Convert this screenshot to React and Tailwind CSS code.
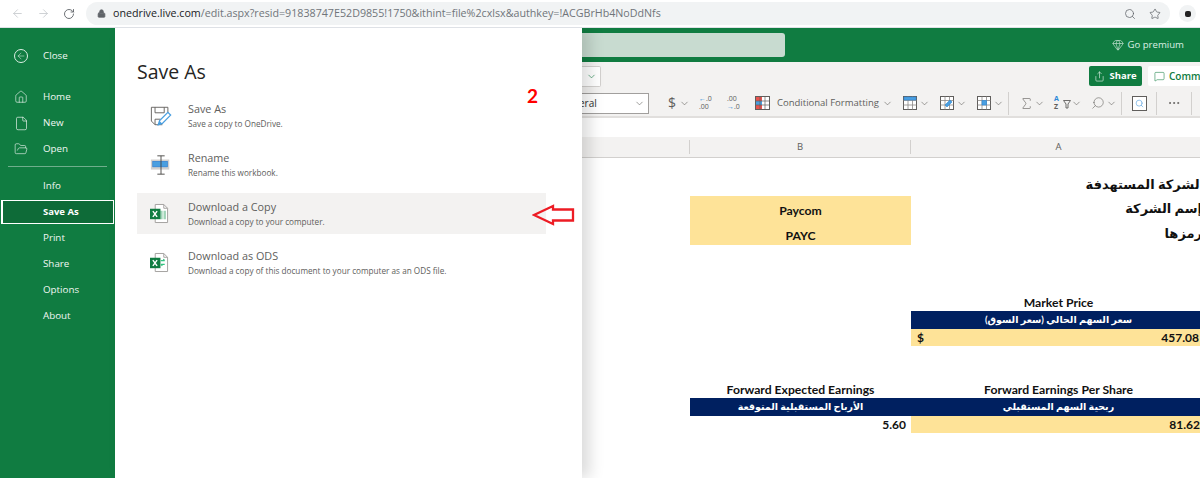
import React from "react";
import { ArrowLeft, ArrowRight, RotateCw, Lock, Search, Star, ChevronDown, Home, File, FolderOpen, MessageSquare, Share, Gem, Sigma, Ellipsis } from "lucide-react";

const ui = "font-['Open_Sans',sans-serif]";
const sheet = "font-['Lato','DejaVu_Sans',sans-serif]";

function SaveIcon() {
  return (
    <svg width="22" height="22" viewBox="0 0 24 24" fill="none">
      <path d="M1.500 2.500h18v9M1.500 2.500v15l4 4h8" stroke="#605e5c" strokeWidth="1" />
      <path d="M5.500 2.500v6h10v-6M5.500 21.500v-6h6" stroke="#605e5c" strokeWidth="1" />
      <path d="M9 21.500l1.500-4.500 9-9 3 3-9 9z" fill="#fff" stroke="#4a9fe0" strokeWidth="1.400" />
      <path d="M9 22l1.500-4.500 3 3z" fill="#4a9fe0" />
    </svg>
  );
}
function RenameIcon() {
  return (
    <svg width="22" height="22" viewBox="0 0 24 24" fill="none">
      <rect x="1" y="6" width="20" height="11" fill="#d2d0ce" />
      <rect x="3" y="8" width="16" height="6" fill="#4a9fe0" stroke="#2b7cd3" strokeWidth=".7" />
      <path d="M12 2v20M8 2h8M8 22h8" stroke="#484644" strokeWidth="1" />
    </svg>
  );
}
function XlIcon({ ods }) {
  return (
    <svg width="19" height="21" viewBox="0 0 20 22" fill="none">
      <path d="M5.500 1.500h9l4 4v15h-13z" fill="#fff" stroke="#a19f9d" strokeWidth="1" />
      <path d="M14.500 1.500v4h4" stroke="#a19f9d" strokeWidth="1" />
      {ods ? (
        <path d="M11.500 9h4M15.500 9l-1.500-1.500M11.500 13h4M11.500 13l1.500 1.500" stroke="#33c481" strokeWidth="1.300" />
      ) : (
        <path d="M12 8v9M15.500 8v9" stroke="#9fd4b7" strokeWidth="2.500" />
      )}
      <rect x="0" y="6" width="11" height="11" fill="#107c41" />
      <path d="M3 8.500l4.500 6M7.500 8.500l-4.500 6" stroke="#fff" strokeWidth="1.500" />
    </svg>
  );
}
function BackstageItem({ icon, title, sub, active }) {
  return (
    <div className={`flex h-[41px] items-center ${active ? "bg-[#f3f2f1]" : ""}`}>
      <div className="flex w-[51px] shrink-0 justify-start pl-[13px]">{icon}</div>
      <div className="flex flex-col">
        <span className="text-[10.800px] leading-[16px] text-[#605e5c]">{title}</span>
        <span className="text-[8.200px] leading-[13px] text-[#605e5c]">{sub}</span>
      </div>
    </div>
  );
}
function NavRow({ icon, label }) {
  return (
    <div className="flex h-[26px] items-center">
      <div className="flex w-[43px] shrink-0 justify-start pl-[14px]">{icon}</div>
      <span className="text-[9.800px] text-[#f0f7f3]">{label}</span>
    </div>
  );
}
function Chev({ cls = "text-[#605e5c]" }) {
  return <ChevronDown size={11} strokeWidth={1.300} className={cls} />;
}
function GridIcon({ accent }) {
  return (
    <svg width="16" height="16" viewBox="0 0 16 16" fill="none">
      <rect x="1.500" y="1.500" width="13" height="13" fill="#fff" stroke="#605e5c" />
      <path d="M1.500 5.500h13M1.500 10h13M6 1.500v13M10.500 1.500v13" stroke="#8a8886" strokeWidth=".8" />
      <path d={accent} fill="#4a9fe0" stroke="#2b88d8" strokeWidth=".6" />
    </svg>
  );
}

export default function App() {
  return (
    <div className={`flex h-[482px] w-[1200px] flex-col overflow-hidden bg-white ${ui}`}>
      {/* browser bar */}
      <div className="flex h-[28px] shrink-0 items-center border-b border-[#dee1e6] bg-white">
        <div className="flex w-[86px] shrink-0 items-center gap-[13px] pl-[11px]">
          <ArrowLeft size={13} strokeWidth={1.500} className="text-[#c4c7cb]" />
          <ArrowRight size={13} strokeWidth={1.500} className="text-[#c4c7cb]" />
          <RotateCw size={12} strokeWidth={1.800} className="text-[#5f6368]" />
        </div>
        <div className="flex h-[23px] w-[1084px] shrink-0 items-center rounded-full bg-[#f1f3f4] pl-[11px] pr-[9px]">
          <Lock size={9} fill="#5f6368" className="text-[#5f6368]" />
          <span className="ml-[7px] flex-1 text-[10.700px] text-[#70757a]">
            <span className="text-[#202124]">onedrive.live.com</span>/edit.aspx?resid=91838747E52D9855!1750&amp;ithint=file%2cxlsx&amp;authkey=!ACGBrHb4NoDdNfs
          </span>
          <Search size={12} strokeWidth={1.500} className="mr-[13px] text-[#5f6368]" />
          <Star size={12} strokeWidth={1.500} className="text-[#5f6368]" />
        </div>
        <div className="ml-[9px] flex h-[17px] w-[17px] items-center justify-center rounded-full bg-[#f1f3f4]">
          <div className="h-[6px] w-[6px] rounded-[2px] bg-[#222]" />
        </div>
      </div>

      <div className="flex h-[450px] shrink-0 overflow-hidden">
        {/* backstage nav */}
        <div className="flex w-[115px] shrink-0 flex-col bg-[#107c41] pt-[15px] text-white">
          <NavRow icon={<ArrowLeft size={10} strokeWidth={1.300} className="box-content rounded-full border border-[#dcefe4] p-[1px] text-[#dcefe4]" />} label="Close" />
          <div className="h-[15px]" />
          <NavRow icon={<Home size={14} strokeWidth={1} />} label="Home" />
          <NavRow icon={<File size={15} strokeWidth={1} />} label="New" />
          <NavRow icon={<FolderOpen size={14} strokeWidth={1} />} label="Open" />
          <div className="mx-[8px] mb-[6px] mt-[4px] h-px bg-[#6fae8c]" />
          <NavRow label="Info" />
          <div className="mx-[1px] mt-[1px] flex h-[24px] items-center border border-l-2 border-white bg-[#0e6b38] pl-[40px] text-[9.500px] font-bold">Save As</div>
          <div className="mt-[1px]"><NavRow label="Print" /></div>
          <NavRow label="Share" />
          <NavRow label="Options" />
          <NavRow label="About" />
        </div>

        {/* save as panel */}
        <div className="relative z-10 w-[467px] shrink-0 bg-white pl-[22px] pr-[36px] shadow-[8px_0_14px_rgba(0,0,0,0.14)]">
          <h1 className="mt-[31px] text-[19.500px] leading-[26px] text-[#252423]">Save As</h1>
          <div className="mt-[10px] flex flex-col gap-[8px]">
            <BackstageItem icon={<SaveIcon />} title="Save As" sub="Save a copy to OneDrive." />
            <BackstageItem icon={<RenameIcon />} title="Rename" sub="Rename this workbook." />
            <BackstageItem active icon={<XlIcon />} title="Download a Copy" sub="Download a copy to your computer." />
            <BackstageItem icon={<XlIcon ods />} title="Download as ODS" sub="Download a copy of this document to your computer as an ODS file." />
          </div>
          <span className="absolute left-[412px] top-[56px] font-['Lato',sans-serif] text-[19px] font-bold leading-[24px] text-[#ff0000]">2</span>
          <svg className="absolute left-[417px] top-[176px]" width="44" height="22" viewBox="0 0 44 22" fill="none">
            <path d="M2 11L21 2v3.500h20v11H21V20z" stroke="#ed1c24" strokeWidth="2.300" fill="none" />
          </svg>
        </div>

        {/* excel */}
        <div className="flex min-w-0 flex-1 flex-col">
          <div className="flex h-[34px] shrink-0 items-center bg-[#107c41]">
            <div className="h-[24px] w-[203px] rounded-r-[3px] bg-[#c8dbd0]" />
            <div className="ml-auto mr-[16px] flex items-center gap-[4px] pt-[1px] text-[9.600px] text-[#dcefe4]">
              <Gem size={12} strokeWidth={1.200} />
              <span>Go premium</span>
            </div>
          </div>
          <div className="flex h-[56px] shrink-0 flex-col border-b-[2px] border-[#e1dfdd] bg-[#f3f2f1]">
            <div className="flex h-[28px] items-center">
              <div className="flex h-[21px] w-[19px] items-center justify-center rounded-r-[2px] border border-l-0 border-[#d2d0ce] bg-white">
                <Chev cls="text-[#107c41]" />
              </div>
              <div className="ml-auto flex h-[20px] w-[53px] items-center justify-center gap-[4px] rounded-[2px] bg-[#107c41] text-[9.500px] font-bold text-white">
                <Share size={11} strokeWidth={1.200} />
                Share
              </div>
              <div className="ml-[6px] flex h-[20px] w-[52px] items-center gap-[4px] overflow-hidden rounded-l-[2px] bg-white pl-[6px] text-[10px] font-semibold text-[#107c41]">
                <MessageSquare size={11} strokeWidth={1.200} className="shrink-0" />
                <span>Comments</span>
              </div>
            </div>
            <div className="flex h-[26px] items-center text-[#605e5c]">
              <div className="flex h-[21px] w-[67px] shrink-0 items-center justify-between border border-l-0 border-[#a19f9d] bg-white pr-[3px] text-[10px]">
                <span className="-ml-[3px] text-[#323130]">eral</span>
                <Chev />
              </div>
              <span className="ml-[19px] text-[14px] leading-none">$</span>
              <span className="ml-[3px]"><Chev /></span>
              <div className="ml-[9px] flex w-[15px] flex-col text-[7px] leading-[8px]"><span><span className="text-[#2b88d8]">←</span>.0</span><span>.00</span></div>
              <div className="ml-[13px] flex w-[15px] flex-col text-[7px] leading-[8px]"><span>.00</span><span><span className="text-[#2b88d8]">→</span>.0</span></div>
              <div className="ml-[13px]">
                <svg width="15" height="14" viewBox="0 0 15 14" fill="none">
                  <rect x="0.500" y="0.500" width="14" height="13" fill="#fff" stroke="#605e5c" />
                  <rect x="1" y="1" width="6" height="4" fill="#e8534f" />
                  <rect x="1" y="5" width="6" height="4" fill="#4a9fe0" />
                  <rect x="1" y="9" width="6" height="4" fill="#e8534f" />
                  <path d="M5 1v12M10 1v12M1 5h13M1 9h13" stroke="#605e5c" strokeWidth=".7" />
                </svg>
              </div>
              <span className="ml-[7px] w-[105px] shrink-0 whitespace-nowrap text-[9.500px]">Conditional Formatting</span>
              <Chev />
              <span className="ml-[9px]"><GridIcon accent="M2 2h12v3H2z" /></span>
              <span className="ml-[1px]"><Chev /></span>
              <span className="ml-[9px]"><GridIcon accent="M6 10l5-5 2 2-5 5z" /></span>
              <span className="ml-[1px]"><Chev /></span>
              <span className="ml-[9px]"><GridIcon accent="M6 5.500h4.500V10H6z" /></span>
              <span className="ml-[1px]"><Chev /></span>
              <div className="ml-[4px] h-[23px] w-px bg-[#d2d0ce]" />
              <Sigma size={15} strokeWidth={1} className="ml-[10px]" />
              <Chev />
              <div className="ml-[9px] flex w-[9px] flex-col text-[7px] font-bold leading-[8px]"><span className="text-[#2b88d8]">A</span><span>Z</span></div>
              <svg width="8" height="9" viewBox="0 0 8 9" fill="none" className="mt-[3px]">
                <path d="M.5.500h7L5 4v4H3V4z" stroke="#605e5c" strokeWidth=".9" />
              </svg>
              <Chev />
              <Search size={14} strokeWidth={1} className="ml-[9px] -scale-x-100" />
              <span className="ml-[1px]"><Chev /></span>
              <div className="ml-[4px] h-[23px] w-px bg-[#d2d0ce]" />
              <div className="ml-[10px] flex h-[15px] w-[15px] items-center justify-center border border-[#605e5c] bg-white">
                <Search size={9} strokeWidth={1.300} className="text-[#2b88d8]" />
              </div>
              <div className="ml-[9px] h-[23px] w-px bg-[#d2d0ce]" />
              <Ellipsis size={14} strokeWidth={1.500} className="ml-[10px] shrink-0" />
              <div className="ml-[10px] h-[23px] w-px bg-[#d2d0ce]" />
            </div>
          </div>
          <div className="h-[19px] shrink-0 bg-white" />
          <div className="flex h-[21px] shrink-0 items-center border-b border-[#d2d0ce] bg-[#f3f2f1] text-[9.500px] text-[#605e5c]">
            <div className="flex h-[14px] w-[108px] shrink-0 items-center justify-end border-r border-[#d2d0ce]" />
            <div className="flex h-[14px] w-[221px] shrink-0 items-center justify-center border-r border-[#d2d0ce]">B</div>
            <div className="flex h-[14px] flex-1 items-center justify-center pl-[6px]">A</div>
          </div>

          {/* sheet */}
          <div className={`grid min-h-0 flex-1 grid-cols-[108px_221px_295px] grid-rows-[14px_24px_24.500px_24.500px_51px_15px_18px_17px_36px_16px_18px_17px] overflow-hidden text-[12.200px] text-[#111] ${sheet}`}>
            <div className="col-span-3" />
            <div />
            <div />
            <div dir="rtl" className="overflow-hidden whitespace-nowrap pr-[2px] text-[13px] font-semibold leading-[24px]">الشركة المستهدفة</div>
            <div />
            <div className="flex items-end justify-center bg-[#fee398] pb-[3px] font-bold leading-none">Paycom</div>
            <div dir="rtl" className="overflow-hidden whitespace-nowrap pr-[4px] text-[13px] font-semibold leading-[24px]">إسم الشركة</div>
            <div />
            <div className="flex items-end justify-center bg-[#fee398] pb-[3px] font-bold leading-none">PAYC</div>
            <div dir="rtl" className="overflow-hidden whitespace-nowrap pr-[4px] text-[13px] font-semibold leading-[24px]">رمزها</div>
            <div className="col-span-3" />
            <div className="col-span-2" />
            <div className="flex items-center justify-center font-bold leading-none">Market Price</div>
            <div className="col-span-2" />
            <div className="flex items-center justify-center bg-[#002060] text-[9.500px] font-bold text-white">سعر السهم الحالي (سعر السوق)</div>
            <div className="col-span-2" />
            <div className="flex items-center justify-between bg-[#fee398] pl-[6px] pr-[7px] text-[12px] font-bold">
              <span>$</span>
              <span>457.08</span>
            </div>
            <div className="col-span-3" />
            <div />
            <div className="flex items-center justify-center font-bold leading-none">Forward Expected Earnings</div>
            <div className="flex items-center justify-center font-bold leading-none">Forward Earnings Per Share</div>
            <div />
            <div className="flex items-center justify-center bg-[#002060] text-[9.500px] font-bold text-white">الأرباح المستقبلية المتوقعة</div>
            <div className="flex items-center justify-center bg-[#002060] text-[9.500px] font-bold text-white">ربحية السهم المستقبلي</div>
            <div />
            <div className="flex items-center justify-end pr-[5px] text-[12px] font-bold">5.60</div>
            <div className="flex items-center justify-end bg-[#fee398] pr-[6px] text-[12px] font-bold">81.62</div>
          </div>
        </div>
      </div>
    </div>
  );
}
